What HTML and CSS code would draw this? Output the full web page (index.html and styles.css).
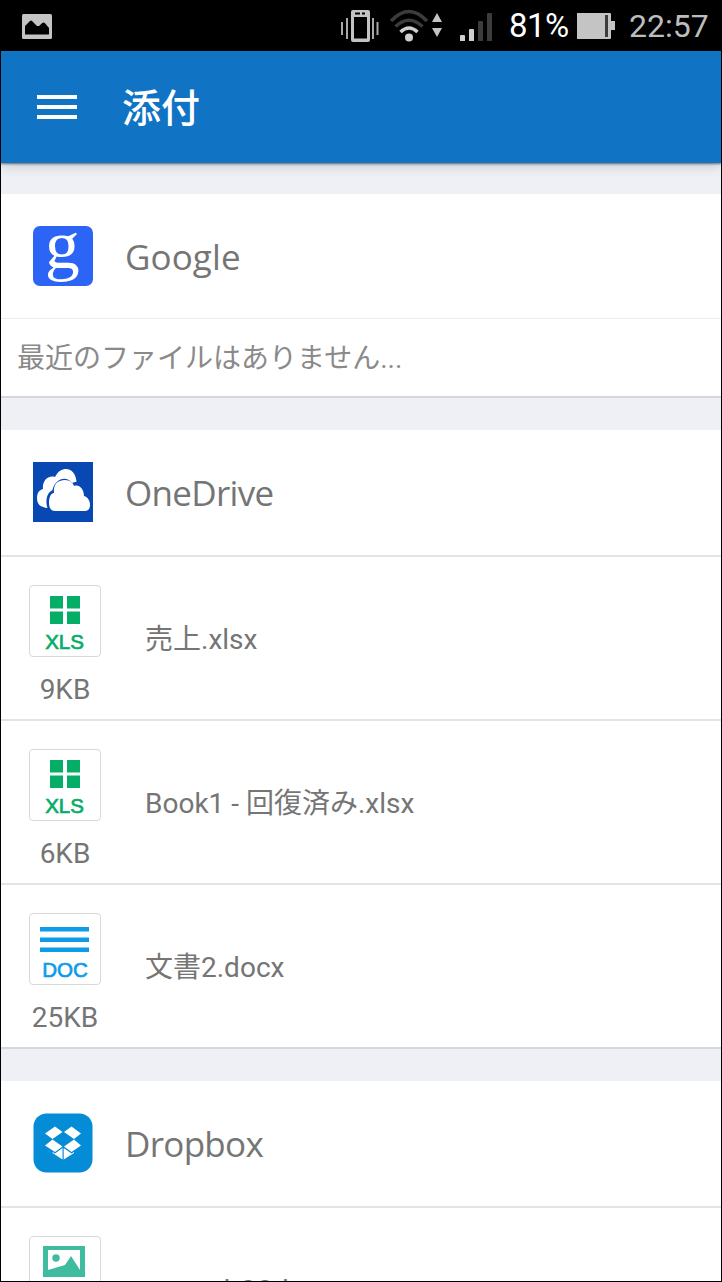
FILE: index.html
```html
<!DOCTYPE html>
<html lang="ja">
<head>
    <meta charset="UTF-8">
    <meta name="viewport" content="width=device-width, initial-scale=1.0">
    <title>添付</title>
    <link rel="stylesheet" href="styles.css">
</head>
<body>
    <div class="screen">
        <div class="status-bar">
            <svg class="icon-photo" width="30" height="25" viewBox="0 0 30 25">
                <rect width="30" height="25" rx="1.5" fill="#c4c4c4"/>
                <path d="M3 20V12L8 7Q9 6.200 10 7L15 12H17L20 9.200Q21.500 7.600 23 9.200L27 14V20Q27 20.500 26 20.500H4Q3 20.500 3 20Z" fill="#000"/>
            </svg>
            <div class="status-right">
                <svg class="icon-vibrate" width="38" height="33" viewBox="0 0 38 33">
                    <path fill="#c4c4c4" fill-rule="evenodd" d="M12 0H27Q29 0 29 2V30Q29 32 27 32H12Q10 32 10 30V2Q10 0 12 0ZM13 7V28.500H26V7ZM14 2.500V4.500H19V2.500ZM21 2.500V4.500H24V2.500Z"/>
                    <path d="M1 12V25M6 8V29M32 8V29M36.500 12V25" stroke="#a8a8a8" stroke-width="2"/>
                </svg>
                <svg class="icon-wifi" width="54" height="34" viewBox="0 0 54 34" fill="none">
                    <path d="M1 12Q19-7 37 12M5.500 17.500Q19 5 32.500 17.500" stroke="#3c3c3c" stroke-width="3.500"/>
                    <path d="M10.500 23Q19 15 27.500 23" stroke="#d0d0d0" stroke-width="3.500"/>
                    <circle cx="19" cy="28.500" r="4" fill="#d0d0d0"/>
                    <path d="M47 4L52 13H42ZM47 28L52 19H42Z" fill="#c4c4c4"/>
                </svg>
                <svg class="icon-signal" width="33" height="29" viewBox="0 0 33 29">
                    <path d="M0 24Q0 23 1 23H4Q5 23 5 24V29H0ZM9 18Q9 17 10 17H13Q14 17 14 18V29H9Z" fill="#cfcfcf"/>
                    <path d="M18 10Q18 9 19 9H22Q23 9 23 10V29H18ZM27 2Q27 1 28 1H31Q32 1 32 2V29H27Z" fill="#3c3c3c"/>
                </svg>
                <span class="battery-level">81%</span>
                <svg class="icon-battery" width="38" height="26" viewBox="0 0 38 26">
                    <path d="M0 0H33Q34 0 34 1V8H38V17H34V25Q34 26 33 26H0Z" fill="#c4c4c4"/>
                    <path d="M28 2H31V24H28Z" fill="#3c3c3c"/>
                </svg>
                <span class="clock">22:57</span>
            </div>
        </div>

        <header class="app-bar">
            <div class="menu-button">
                <span></span>
                <span></span>
                <span></span>
            </div>
            <h1>添付</h1>
        </header>

        <main>
            <section class="card">
                <div class="card-header google">
                    <svg class="service-icon" viewBox="0 0 60 60">
                        <rect width="60" height="60" rx="7" fill="#2c64f6"/>
                        <text class="google-g" transform="translate(12 41.500) scale(1.120 1.080)">g</text>
                    </svg>
                    <h2>Google</h2>
                </div>
                <p class="empty-text">最近のファイルはありません...</p>
            </section>

            <section class="card">
                <div class="card-header">
                    <svg class="service-icon" viewBox="0 0 60 60">
                        <rect width="60" height="60" fill="#0848b2"/>
                        <path d="M14 46C7 45 4 42 4 36C4 31 6 28 10 27C9 19 15 13 22 15C25 9 29 7 33 7C38 7 43 11 43.500 20C42 20 40 20.500 39 21C33 13 22 17 19.500 28C13 31 12.500 40 14.500 46Z" fill="#fff"/>
                        <path d="M22 49C18 49 16 46 16 41C16 35 18 31 21 31C20 22 25 18 32 18C37 18 40 21 41 24C46 22 51 27 51 34C55 35 57 39 57 43C57 47 55 49 52 49Z" fill="#fff"/>
                    </svg>
                    <h2>OneDrive</h2>
                </div>
                <div class="file-row">
                    <div class="file-info">
                        <svg class="file-icon" viewBox="1 1 70 70">
                            <path d="M21 11H34V23.500H21ZM38 11H51V23.500H38ZM21 26.500H34V39H21ZM38 26.500H51V39H38Z" fill="#06ad67"/>
                            <text x="35.500" y="64" class="type-label xls">XLS</text>
                        </svg>
                        <span class="file-size">9KB</span>
                    </div>
                    <span class="file-name">売上.xlsx</span>
                </div>
                <div class="file-row">
                    <div class="file-info">
                        <svg class="file-icon" viewBox="1 1 70 70">
                            <path d="M21 11H34V23.500H21ZM38 11H51V23.500H38ZM21 26.500H34V39H21ZM38 26.500H51V39H38Z" fill="#06ad67"/>
                            <text x="35.500" y="64" class="type-label xls">XLS</text>
                        </svg>
                        <span class="file-size">6KB</span>
                    </div>
                    <span class="file-name">Book1 - 回復済み.xlsx</span>
                </div>
                <div class="file-row">
                    <div class="file-info">
                        <svg class="file-icon" viewBox="1 1 70 70">
                            <path d="M11 14H60V18.500H11ZM11 24.500H60V29H11ZM11 34.500H60V39H11Z" fill="#0d9de8"/>
                            <text x="36" y="64" class="type-label doc">DOC</text>
                        </svg>
                        <span class="file-size">25KB</span>
                    </div>
                    <span class="file-name">文書2.docx</span>
                </div>
            </section>

            <section class="card">
                <div class="card-header">
                    <svg class="service-icon" viewBox="0 0 60 60">
                        <rect x="0.500" y="0.500" width="59" height="59" rx="13" fill="#058cd7"/>
                        <path d="M22 13.500L29.500 19L19.500 26L12 20.500ZM38.500 13.500L48 20.500L41 26L31 19ZM19.500 26.500L29.500 33.500L22 39L12 32.500ZM41 26.500L48 32.500L38.500 39L31 33.500ZM29.500 35V46.500L19.500 40V39L22 40.500ZM30.700 35L38.500 40.500L41 39V40L30.700 46.500Z" fill="#fff"/>
                    </svg>
                    <h2>Dropbox</h2>
                </div>
                <div class="file-row">
                    <div class="file-info">
                        <svg class="file-icon" viewBox="1 1 70 70">
                            <path d="M14 10H56V41H14Z" fill="#3fbb9e"/>
                            <path d="M19 14H51V34L42 20L36 29L19 34Z" fill="#fff"/>
                            <circle cx="27" cy="22" r="3.700" fill="#3fbb9e"/>
                        </svg>
                    </div>
                    <span class="file-name image-name">pr_web22.bmp</span>
                </div>
            </section>
        </main>
    </div>
</body>
</html>
```

FILE: styles.css
```css
* {
    box-sizing: border-box;
}

body {
    margin: 0;
    font-family: Roboto, "Noto Sans CJK JP", sans-serif;
    color: #757575;
}

/* Phone screen */
.screen {
    width: 722px;
    height: 1282px;
    overflow: hidden;
    border: 1px solid #000;
    background-color: #eff0f6;
}

/* Status bar */
.status-bar {
    height: 50px;
    padding: 0 12px 0 21px;
    display: flex;
    align-items: center;
    justify-content: space-between;
    background-color: #000;
    color: #fff;
    font-size: 32px;
    line-height: 50px;
}
.status-right {
    display: flex;
    align-items: center;
}
.icon-wifi {
    margin-left: 11px;
}
.icon-signal {
    margin-left: 16px;
}
.battery-level {
    width: 59px;
    margin: 0 9px 0 16px;
    font-size: 33px;
    letter-spacing: -0.6px;
}
.clock {
    width: 80px;
    margin-left: 14px;
    color: #bdbdbd;
}

/* App bar */
.app-bar {
    position: relative;
    height: 112px;
    padding-left: 36px;
    display: flex;
    align-items: center;
    background-color: #1173c3;
    box-shadow: 0 1px 2px rgba(0, 0, 0, 0.5), 0 2px 12px rgba(0, 0, 0, 0.2);
}
.menu-button {
    width: 40px;
    display: flex;
    flex-direction: column;
    gap: 6px;
}
.menu-button span {
    height: 4px;
    background-color: #fff;
}
h1 {
    margin: 3px 0 0 45px;
    color: #fff;
    font-size: 39px;
    font-weight: 500;
    line-height: 56px;
}

/* Cards */
main {
    padding-top: 31px;
}
.card {
    margin-bottom: 32px;
    background-color: #fff;
    border-bottom: 2px solid #d6d7dc;
}
.card-header {
    height: 127px;
    padding: 0 0 1px 32px;
    display: flex;
    align-items: center;
    border-bottom: 2px solid #e3e4e8;
}
.card-header.google {
    height: 125px;
    padding-bottom: 0;
    border-bottom: 1px solid #ededed;
}
.service-icon {
    width: 60px;
    height: 60px;
    overflow: visible;
}
.google-g {
    font-family: "Liberation Serif", serif;
    font-size: 62px;
    fill: #fff;
}
h2 {
    margin: 1px 0 0 32px;
    font-family: "Open Sans", sans-serif;
    font-size: 35px;
    font-weight: 400;
    line-height: 48px;
    letter-spacing: -0.7px;
}
.google h2 {
    letter-spacing: 0.1px;
}
.empty-text {
    height: 77px;
    margin: 0;
    padding-left: 16px;
    color: #8a8a8a;
    font-size: 28px;
    line-height: 80px;
}

/* File rows */
.file-row {
    height: 164px;
    display: flex;
    border-bottom: 2px solid #e3e3e3;
}
.file-row:last-child {
    height: 162px;
    border-bottom: none;
}
.file-info {
    width: 128px;
    padding-top: 28px;
    display: flex;
    flex-direction: column;
    align-items: center;
}
.file-icon {
    width: 72px;
    height: 72px;
    border: 1px solid #d8d8d8;
    border-radius: 4px;
    flex-shrink: 0;
}
.type-label {
    font-family: "Liberation Sans", sans-serif;
    font-size: 20.5px;
    text-anchor: middle;
    stroke-width: 0.7px;
}
.type-label.xls {
    fill: #06ad67;
    stroke: #06ad67;
}
.type-label.doc {
    fill: #0d9de8;
    stroke: #0d9de8;
}
.file-size {
    margin-top: 17px;
    font-size: 28px;
    line-height: 32px;
}
.file-name {
    margin-left: 16px;
    font-size: 28px;
    line-height: 166px;
    white-space: nowrap;
}
.image-name {
    letter-spacing: 1px;
}
```
